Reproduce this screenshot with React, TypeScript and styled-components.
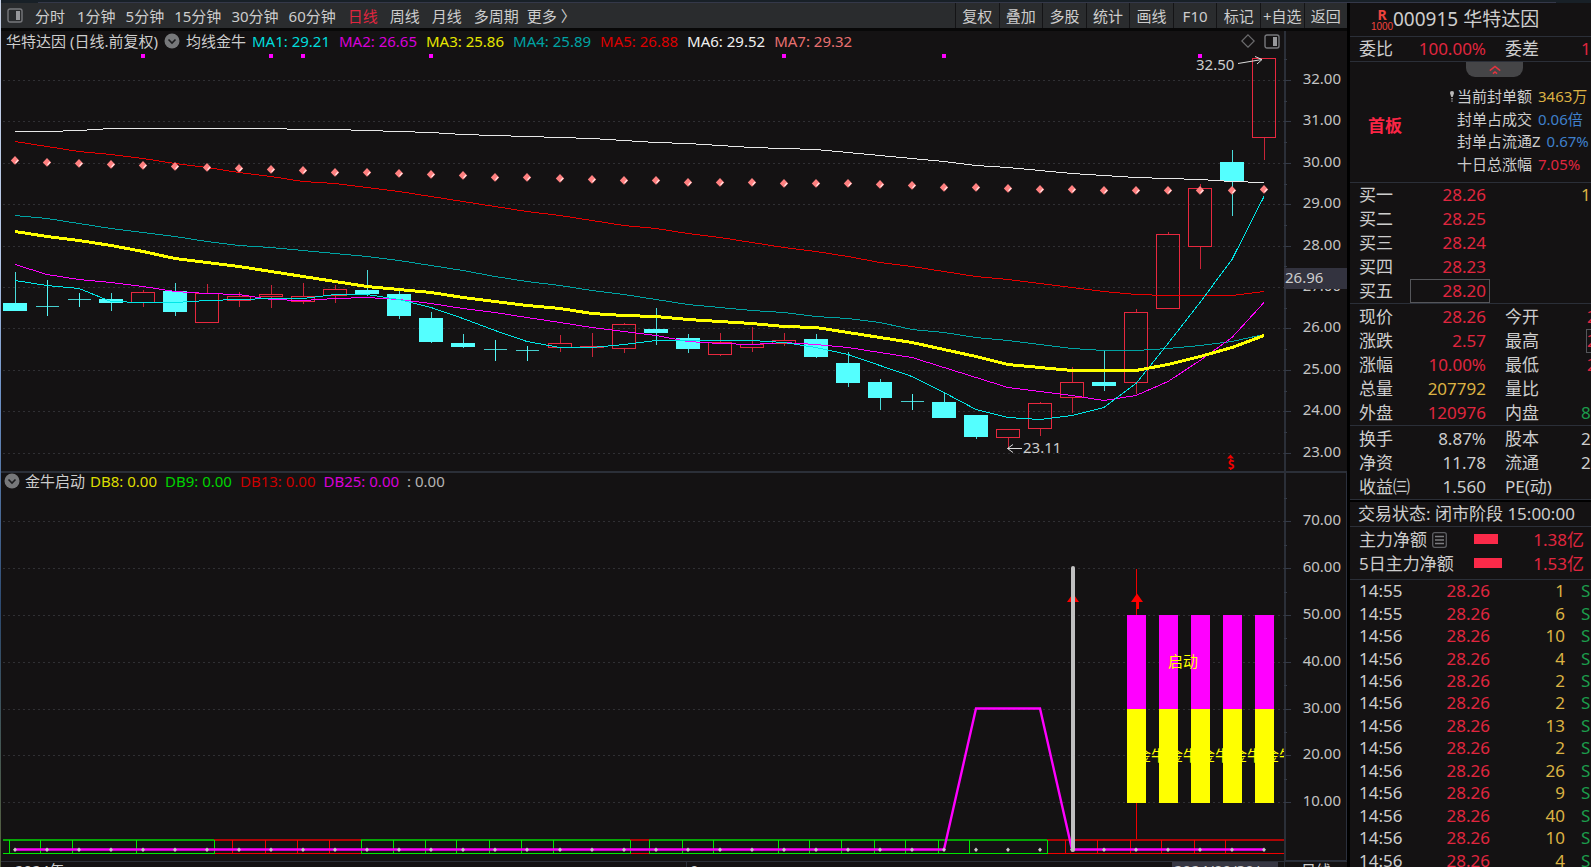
import React from "react";
import styled, { createGlobalStyle, css } from "styled-components";

/* ---------- theme values ---------- */

const color = {
  bg: "#141213",
  bar: "#2a2c2e",
  rule: "#2b2f38",
  text: "#cdcdcd",
  red: "#e0263f",
  gold: "#dcb243",
  blue: "#3f80cc",
  green: "#1c9c4c",
  up: "#e8283f",
  down: "#54ffff",
};

const fontStack = `"Noto Sans", "Noto Sans CJK SC", sans-serif`;

const GlobalStyle = createGlobalStyle`
  * { box-sizing: border-box; }
  body {
    margin: 0;
    overflow: hidden;
    background: #000;
    color: ${color.text};
    font: 400 15px/20px ${fontStack};
  }
  dl, dd, dt, p, h1, h2 { margin: 0; font-size: inherit; font-weight: 400; }
`;

/* ---------- page frame ---------- */

const Page = styled.div`
  display: flex;
  height: 100vh;
  overflow: hidden;
`;

const DesktopEdge = styled.div`
  flex: 0 0 1px;
  background: linear-gradient(#c9d3e8, #b4c6e6 30%, #6f93c8 45%, #2d4a70 70%, #55603f 98%);
`;

const Window = styled.div`
  display: flex;
  flex: 1;
  flex-direction: column;
  min-width: 0;
`;

const TopStrip = styled.div`
  flex: 0 0 3px;
  padding: 2px 35px 0 37px;
  background: #182027;
`;

const TopLine = styled.div`
  height: 1px;
  background: #343849;
`;

const Body = styled.div`
  display: flex;
  flex: 1;
  gap: 3px;
  min-height: 0;
`;

const ChartColumn = styled.main`
  flex: 1;
  min-width: 0;
  overflow: hidden;
  background: ${color.bg};
`;

/* ---------- toolbar ---------- */

const Toolbar = styled.nav`
  display: flex;
  height: 28px;
  border-bottom: 3px solid #080808;
  background: ${color.bar};
`;

const Periods = styled.div`
  display: flex;
  flex: 1;
  align-items: center;
  gap: 12px;
  padding-left: 6px;
`;

const PeriodGroup = styled.div<{ $gap: number }>`
  display: flex;
  gap: ${(p) => p.$gap}px;
`;

const plainButton = css`
  padding: 0;
  border: 0;
  background: none;
  color: inherit;
  font: inherit;
  white-space: nowrap;
  cursor: pointer;
`;

const PeriodButton = styled.button<{ $active?: boolean }>`
  ${plainButton}
  color: ${(p) => (p.$active ? color.red : color.text)};
`;

const IconButton = styled.button`
  ${plainButton}
  display: flex;
`;

const Tools = styled.div`
  display: flex;
  flex: 0 0 392px;
`;

const ToolButton = styled.button`
  ${plainButton}
  flex: 1 1 0;
  min-width: 0;
  border-left: 1px solid #141416;
`;

/* ---------- chart panels ---------- */

const PanelHead = styled.header<{ $height: number }>`
  display: grid;
  grid-template-columns: minmax(0, 1283fr) minmax(0, 63fr);
  height: ${(p) => p.$height}px;
  line-height: 16px;
`;

const HeadMain = styled.div<{ $pad: number; $gap: number }>`
  display: flex;
  align-items: center;
  gap: ${(p) => p.$gap}px;
  padding: 0 4px 2px ${(p) => p.$pad}px;
  white-space: nowrap;
`;

const HeadAxis = styled.div<{ $boxed?: boolean }>`
  border-left: 2px solid ${color.rule};
  border-right: ${(p) => (p.$boxed ? "1px solid #2b303d" : "0")};
`;

const Readouts = styled.div<{ $gap: number }>`
  display: flex;
  flex: 1;
  gap: ${(p) => p.$gap}px;
`;

const Readout = styled.span<{ $color: string }>`
  color: ${(p) => p.$color};
`;

const HeadIcons = styled.div`
  display: flex;
  align-items: center;
  gap: 9px;
`;

const Panel = styled.section<{ $divided?: boolean }>`
  border-top: ${(p) => (p.$divided ? `2px solid ${color.rule}` : "0")};
`;

const Plot = styled.svg`
  display: block;
  width: 100%;
  height: auto;
  font-family: ${fontStack};
  font-size: 15px;
`;

const TimeAxis = styled.footer`
  display: grid;
  grid-template-columns:
    minmax(0, 685fr) minmax(0, 486fr) minmax(0, 106fr) minmax(0, 6fr) minmax(0, 63fr);
  height: 24px;
  border-top: 1px solid ${color.rule};
  line-height: 17px;
  white-space: nowrap;
`;

const TimeSpan = styled.div<{ $pad: number; $ruled?: boolean }>`
  padding-left: ${(p) => p.$pad}px;
  border-left: ${(p) => (p.$ruled ? `1px solid ${color.rule}` : "0")};
`;

const DateTag = styled.div`
  padding-left: 2px;
  background: #373743;
`;

/* ---------- quote side panel ---------- */

const Side = styled.aside`
  flex: 0 0 241px;
  overflow: hidden;
  background: ${color.bg};
  font-size: 17px;
  line-height: 24px;
  white-space: nowrap;
`;

const StockTitle = styled.h1`
  display: flex;
  align-items: center;
  height: 34px;
  padding: 0 0 2px 21px;
  border-bottom: 1px solid ${color.rule};
  font-size: 19px;
`;

const MarginBadge = styled.span`
  display: flex;
  flex-direction: column;
  align-items: center;
  width: 22px;
  padding-top: 3px;
  color: #f0443e;
`;

const BadgeLetter = styled.b`
  font-size: 14px;
  line-height: 13px;
`;

const BadgeNumber = styled.span`
  font-family: "Liberation Sans", sans-serif;
  font-size: 10px;
  line-height: 12px;
`;

const Block = styled.div<{ $heavy?: boolean; $pad: number }>`
  padding-top: ${(p) => p.$pad}px;
  border-bottom: 1px solid ${color.rule};
  margin-bottom: ${(p) => (p.$heavy ? 2 : 0)}px;
  box-shadow: ${(p) => (p.$heavy ? "0 2px 0 #000" : "none")};
`;

const QuoteRow = styled.dl`
  display: grid;
  grid-template-columns: 58px 73px 92px 1fr;
  height: 24px;
  padding-left: 9px;
  margin-right: -10px;
`;

const Label = styled.dt<{ $second?: boolean }>`
  padding-left: ${(p) => (p.$second ? 15 : 0)}px;
`;

const Value = styled.dd<{ $tone: string; $framed?: boolean }>`
  margin-left: -7px;
  padding-right: 3px;
  border: 1px solid ${(p) => (p.$framed ? "#55565a" : "transparent")};
  color: ${(p) => p.$tone};
  line-height: 22px;
  text-align: right;
`;

const EdgeValue = styled.dd<{ $tone: string; $framed?: boolean; $price?: boolean }>`
  margin-left: ${(p) => (p.$price ? 4 : -2)}px;
  border: 1px solid ${(p) => (p.$framed ? "#55565a" : "transparent")};
  color: ${(p) => p.$tone};
  line-height: 22px;
`;

const LimitBlock = styled.section`
  height: 121px;
  border-bottom: 1px solid ${color.rule};
`;

const CollapseTab = styled.button`
  ${plainButton}
  display: flex;
  align-items: center;
  justify-content: center;
  width: 57px;
  height: 15px;
  margin-left: 116px;
  border-radius: 0 0 9px 9px;
  background: #454547;
`;

const LimitBody = styled.div`
  display: flex;
  align-items: center;
  padding-top: 8px;
`;

const LimitName = styled.b`
  flex: 0 0 99px;
  padding: 0 0 9px 18px;
  color: #fb2545;
`;

const LimitList = styled.ul`
  display: grid;
  grid-auto-rows: 1fr;
  height: 90px;
  margin: 0;
  padding: 0;
  list-style: none;
  font-size: 15px;
  line-height: 22px;
`;

const LimitItem = styled.li`
  display: flex;
  align-items: center;
  gap: 6px;
`;

const LimitLabel = styled.span`
  display: flex;
  align-items: center;
`;

const PinSlot = styled.span`
  display: flex;
  width: 8px;
`;

const Toned = styled.span<{ $tone: string }>`
  color: ${(p) => p.$tone};
`;

const Status = styled.p`
  height: 25px;
  padding-left: 8px;
  border-bottom: 1px solid ${color.rule};
`;

const FlowRow = styled.dl`
  display: grid;
  grid-template-columns: 115px 34px 1fr;
  align-items: center;
  height: 24px;
  padding: 0 7px 0 9px;
`;

const FlowLabel = styled.dt`
  display: flex;
  align-items: center;
  gap: 5px;
`;

const FlowBar = styled.dd<{ $width: number }>`
  width: ${(p) => p.$width}px;
  height: 10px;
  margin-bottom: 2px;
  background: #fb2a49;
`;

const FlowValue = styled.dd`
  color: ${color.red};
  text-align: right;
`;

const FlowBlock = styled.div`
  height: 53px;
  padding-top: 1px;
  border-bottom: 1px solid ${color.rule};
`;

const TickTable = styled.table`
  width: 100%;
  height: 292px;
  border-collapse: collapse;
  table-layout: fixed;
  line-height: 22px;
`;

const Tick = styled.td<{ $tone: string; $width?: number; $right?: boolean; $pad?: number }>`
  width: ${(p) => (p.$width ? `${p.$width}px` : "auto")};
  padding: 0 0 0 ${(p) => p.$pad ?? 0}px;
  color: ${(p) => p.$tone};
  text-align: ${(p) => (p.$right ? "right" : "left")};
`;

/* ---------- icons ---------- */

const PanelIcon = () => (
  <svg width="16" height="15" viewBox="0 0 16 15" aria-hidden="true">
    <rect x="1" y="1" width="14" height="13" rx="2" fill="none" stroke="#77787c" strokeWidth="1.4" />
    <rect x="9" y="3" width="4" height="9" fill="#97989b" />
  </svg>
);

const ChevronDisc = () => (
  <svg width="16" height="16" viewBox="0 0 16 16" aria-hidden="true">
    <circle cx="8" cy="8" r="7.5" fill="#77787a" />
    <path d="M4.5 6.5 8 10l3.5-3.5" fill="none" stroke="#1c1c1e" strokeWidth="1.6" />
  </svg>
);

const DiamondIcon = () => (
  <svg width="14" height="14" viewBox="0 0 14 14" aria-hidden="true">
    <path d="M7 .8 13.2 7 7 13.2.8 7z" fill="none" stroke="#6c6c6e" strokeWidth="1.2" />
  </svg>
);

const DoubleUp = () => (
  <svg width="12" height="10" viewBox="0 0 12 10" aria-hidden="true">
    <path d="M.8 5.6 6 1.4l5.2 4.2M3.9 8.6 6 6.9l2.1 1.7" fill="none" stroke="#e5343f" strokeWidth="1.5" />
  </svg>
);

const PinIcon = () => (
  <svg width="6" height="13" viewBox="0 0 6 13" aria-hidden="true">
    <path d="M3 1a2 2 0 0 1 2 2.2L3.7 7H2.3L1 3.2A2 2 0 0 1 3 1z" fill="#b9b9b9" />
    <path d="M2.4 8h1.2v1.6H2.4zM2.4 10.6h1.2v1.2H2.4z" fill="#b9b9b9" />
  </svg>
);

const ListIcon = () => (
  <svg width="15" height="16" viewBox="0 0 15 16" aria-hidden="true">
    <rect x=".7" y=".7" width="13.6" height="14.6" rx="2" fill="none" stroke="#5d5e62" strokeWidth="1.3" />
    <path d="M3 4.5h9M3 8h9M3 11.5h9" stroke="#7c7d80" strokeWidth="1.4" />
  </svg>
);

/* ---------- chart data, in plot coordinates ---------- */

const xAt = (i: number) => Math.round(15 + 32.03 * i);
const AXIS_X = 1284;

type Candle = [kind: "u" | "d", high: number, top: number, bottom: number, low: number];

const candles: Candle[] = [
  ["d", 272, 303, 310, 311], ["d", 280, 306, 306, 316], ["d", 293, 299, 299, 307],
  ["d", 293, 299, 302, 311], ["u", 290, 292, 302, 307], ["d", 283, 291, 311, 316],
  ["u", 284, 293, 322, 322], ["u", 292, 296, 300, 307], ["u", 285, 294, 296, 308],
  ["u", 283, 296, 301, 304], ["u", 285, 289, 295, 303], ["d", 270, 290, 293, 296],
  ["d", 290, 294, 315, 319], ["d", 312, 318, 341, 343], ["d", 334, 343, 346, 348],
  ["d", 340, 349, 349, 361], ["d", 346, 350, 350, 361], ["u", 335, 343, 347, 352],
  ["u", 333, 346, 347, 357], ["u", 323, 324, 348, 353], ["d", 308, 329, 332, 345],
  ["d", 334, 338, 348, 353], ["u", 333, 342, 354, 356], ["u", 327, 344, 347, 352],
  ["u", 333, 340, 343, 346], ["d", 334, 339, 356, 358], ["d", 352, 363, 382, 387],
  ["d", 379, 382, 397, 410], ["d", 394, 401, 401, 410], ["d", 392, 402, 417, 418],
  ["d", 415, 415, 436, 439], ["u", 429, 429, 437, 448], ["u", 402, 403, 428, 436],
  ["u", 367, 382, 397, 413], ["d", 350, 382, 385, 391], ["u", 309, 312, 382, 394],
  ["u", 232, 234, 308, 308], ["u", 184, 188, 246, 269], ["d", 150, 162, 180, 216],
  ["u", 58, 58, 137, 160],
];

const averages: { stroke: string; width: number; ys: number[] }[] = [
  {
    stroke: "#e8e8e8", width: 1,
    ys: [131, 131, 130, 128, 128, 128, 128, 128, 128, 129, 129, 130, 131, 132, 134, 135, 136, 137, 138, 140, 142, 143, 145, 147, 148, 149, 152, 155, 158, 161, 165, 167, 170, 173, 175, 177, 178, 179, 181, 182],
  },
  {
    stroke: "#e60000", width: 1,
    ys: [141, 146, 151, 154, 158, 163, 167, 172, 176, 181, 183, 187, 191, 196, 201, 206, 211, 215, 220, 225, 228, 233, 237, 242, 247, 251, 256, 262, 266, 271, 276, 279, 283, 287, 291, 294, 295, 295, 295, 291],
  },
  {
    stroke: "#00a3a3", width: 1,
    ys: [215, 218, 223, 228, 232, 236, 241, 245, 247, 250, 253, 256, 260, 265, 270, 276, 281, 285, 290, 294, 299, 304, 307, 310, 312, 316, 318, 322, 329, 332, 337, 340, 344, 348, 350, 350, 348, 345, 341, 334],
  },
  {
    stroke: "#ff00ff", width: 1,
    ys: [264, 274, 279, 282, 286, 291, 293, 294, 299, 300, 298, 297, 299, 303, 308, 312, 317, 322, 327, 331, 335, 341, 343, 344, 342, 344, 347, 352, 357, 367, 377, 387, 391, 395, 400, 395, 381, 360, 337, 302],
  },
  {
    stroke: "#00e6e6", width: 1,
    ys: [280, 285, 288, 301, 302, 302, 300, 299, 298, 298, 294, 294, 299, 307, 318, 330, 341, 347, 347, 344, 340, 340, 340, 340, 342, 347, 354, 365, 376, 392, 409, 417, 419, 415, 407, 383, 343, 302, 259, 196],
  },
  {
    stroke: "#ffff00", width: 3,
    ys: [231, 236, 240, 245, 251, 258, 262, 266, 271, 276, 281, 286, 289, 292, 297, 301, 305, 308, 313, 315, 316, 319, 321, 323, 326, 327, 332, 337, 342, 349, 356, 364, 367, 370, 370, 370, 364, 356, 347, 335],
  },
];

const dotLine = [160, 162, 163, 164, 165, 166, 167, 168, 169, 170, 172, 172, 173, 174, 175, 177, 177, 178, 179, 180, 180, 182, 182, 182, 183, 183, 183, 184, 185, 187, 187, 188, 189, 189, 190, 190, 190, 190, 190, 189];

const signalDays = [4, 8, 9, 13, 24, 29, 37];

const priceY = (p: number) => Math.round(80 + (32 - p) * 41.4);
const levelY = (v: number) => Math.round(849 - v * 4.68);

const Grid = ({ ys }: { ys: number[] }) => (
  <g stroke="#303034" strokeDasharray="2 3" shapeRendering="crispEdges">
    {ys.map((y) => (
      <line key={y} x1="3" x2={AXIS_X} y1={y + 0.5} y2={y + 0.5} />
    ))}
  </g>
);

const Scale = ({ values, at, step }: { values: number[]; at: (v: number) => number; step: number }) => (
  <>
    <g stroke="#343a46" shapeRendering="crispEdges">
      {values.map((v) => (
        <path key={v} d={`M${AXIS_X} ${at(v) + 0.5}h7M${AXIS_X} ${at(v + step / 2) + 0.5}h3`} />
      ))}
    </g>
    <g fill="#c4c4c4" textAnchor="end">
      {values.map((v) => (
        <text key={v} x="1341" y={at(v) + 4}>{v.toFixed(2)}</text>
      ))}
    </g>
  </>
);

const CandleMark = ({ i, candle }: { i: number; candle: Candle }) => {
  const [kind, high, top, bottom, low] = candle;
  const x = xAt(i);
  const stroke = kind === "u" ? color.up : color.down;
  return (
    <g stroke={stroke} fill={kind === "u" ? "none" : color.down}>
      <path d={`M${x + 0.5} ${high}V${top}M${x + 0.5} ${bottom}V${low}`} strokeOpacity=".85" />
      {top === bottom ? (
        <path d={`M${x - 11} ${top + 0.5}h23M${x + 0.5} ${high}V${low}`} strokeOpacity=".8" />
      ) : (
        <rect x={x - 11.5} y={top + 0.5} width="23" height={bottom - top} />
      )}
    </g>
  );
};

const PricePlot = () => {
  const prices = [32, 31, 30, 29, 28, 27, 26, 25, 24, 23];
  return (
    <Plot viewBox="1 53 1346 418" role="img" aria-label="华特达因 日线">
      <Grid ys={prices.map(priceY)} />
      <g shapeRendering="crispEdges">
        {candles.map((c, i) => <CandleMark key={i} i={i} candle={c} />)}
        {averages.map((a) => (
          <polyline
            key={a.stroke}
            points={a.ys.map((y, i) => `${xAt(i)},${y + 0.5}`).join(" ")}
            fill="none"
            stroke={a.stroke}
            strokeWidth={a.width}
          />
        ))}
        {signalDays.map((i) => (
          <rect key={i} x={xAt(i) - 2} y="54" width="4" height="4" fill="#ff00ff" />
        ))}
      </g>
      {dotLine.map((y, i) => (
        <g key={i}>
          <path d={`M${xAt(i)} ${y - 4}l4.2 4.4-4.2 4.4-4.2-4.4z`} fill="#ff8080" />
          <path d={`M${xAt(i) + 0.5} ${y + 3}l2.6-3`} stroke="#ffe0e0" strokeWidth="1.2" />
        </g>
      ))}
      <g fill="none" stroke="#dcdcdc">
        <path d="M1238 63.5 1262 59.5M1255 56.5l7 3-5 4.5" />
        <path d="M1022 448.5h-14.5M1013 444.5l-5.5 4 5.5 4" />
      </g>
      <g fill="#cdcdcd">
        <text x="1196" y="70">32.50</text>
        <text x="1023" y="453">23.11</text>
      </g>
      <g fill="#f00000">
        <path d="M1230.5 454.5l3.5 4h-7z" />
        <text x="1231" y="469" textAnchor="middle" fontSize="12" fontWeight="700">S</text>
        <path d="M1230 459h1.5v1.5h-1.5zM1230 468.5h1.5v1.5h-1.5z" />
      </g>
      <rect x="1284" y="53" width="2" height="418" fill={color.rule} />
      <Scale values={prices} at={priceY} step={1} />
      <rect x="1284" y="268" width="63" height="21" fill="#33333f" />
      <text x="1285" y="283" fill="#cdcdcd">26.96</text>
    </Plot>
  );
};

/* Runs of the trend strip along the zero line: colour, extent and inner dividers. */
const stripRuns: { stroke: string; from: number; to: number; marks: number[] }[] = [
  { stroke: "#f00000", from: 214, to: 361, marks: [232, 265, 297, 329] },
  { stroke: "#f00000", from: 630, to: 649, marks: [] },
  { stroke: "#f00000", from: 1047, to: 1284, marks: [1065, 1097, 1130, 1161, 1194, 1225] },
  { stroke: "#00e600", from: 3, to: 214, marks: [9, 40, 72, 136, 214] },
  { stroke: "#00e600", from: 361, to: 630, marks: [361, 393, 425, 456, 489, 521, 553, 630] },
  { stroke: "#00e600", from: 649, to: 1047, marks: [649, 682, 713, 778, 809, 841, 874, 905, 938, 969, 1047] },
];

const barDays = [35, 36, 37, 38, 39];

const UpMarker = ({ x }: { x: number }) => (
  <path d={`M${x} 593.5l6 8.5h-4v7h-2v-7h-6z`} fill="#ff0000" />
);

const SignalPlot = () => {
  const levels = [70, 60, 50, 40, 30, 20, 10];
  return (
    <Plot viewBox="1 491 1346 370" role="img" aria-label="金牛启动">
      <Grid ys={levels.map(levelY)} />
      <g fill="none" shapeRendering="crispEdges">
        {stripRuns.map((r) => (
          <g key={r.from} stroke={r.stroke}>
            <path d={`M${r.from} 840H${r.to}`} strokeWidth="2" strokeOpacity=".7" />
            <path d={`M${r.from} 853.5H${r.to}` + r.marks.map((m) => `M${m + 0.5} 840V854`).join("")} />
          </g>
        ))}
        <path d="M1136.5 569V839" stroke="#f00000" />
      </g>
      <UpMarker x={1137} />
      <path d="M1073 593.5l6 8.5h-12z" fill="#ff0000" />
      <path
        d={`M15 849.5H${xAt(29)}L${xAt(30)} 708.5H${xAt(32)}L${xAt(33)} 849.5H${xAt(39)}`}
        fill="none"
        stroke="#ff00ff"
        strokeWidth="2.4"
      />
      {candles.map((_, i) => (
        <path key={i} d={`M${xAt(i)} 847.5l2 2.2-2 2.2-2-2.2z`} fill="#c8c8c8" />
      ))}
      <path d="M1073 568V850" stroke="#c0c0c0" strokeWidth="4" strokeLinecap="round" />
      {barDays.map((i) => (
        <g key={i}>
          <rect x={xAt(i) - 9} y="615" width="19" height="94" fill="#ff00ff" />
          <rect x={xAt(i) - 9} y="709" width="19" height="94" fill="#ffff00" />
        </g>
      ))}
      <g fill="#ffff00">
        <text x="1168" y="667">启动</text>
        {barDays.map((i) => <text key={i} x={xAt(i)} y="761">金牛</text>)}
      </g>
      <rect x="1284" y="491" width="63" height="370" fill={color.bg} />
      <path d="M1346.5 491V860.5H1285" fill="none" stroke="#2b303d" />
      <rect x="1284" y="491" width="2" height="370" fill={color.rule} />
      <Scale values={levels} at={levelY} step={10} />
    </Plot>
  );
};

/* ---------- text content ---------- */

const minutes = ["1分钟", "5分钟", "15分钟", "30分钟", "60分钟"];
const longer = ["日线", "周线", "月线"];
const tools = ["复权", "叠加", "多股", "统计", "画线", "F10", "标记", "+自选", "返回"];

const maReadouts: [string, string][] = [
  ["MA1: 29.21", "#00dcdc"], ["MA2: 26.65", "#d800d8"], ["MA3: 25.86", "#e6e600"],
  ["MA4: 25.89", "#00a3a3"], ["MA5: 26.88", "#dc0000"], ["MA6: 29.52", "#f0f0f0"],
  ["MA7: 29.32", "#e87070"],
];

const dbReadouts: [string, string][] = [
  ["DB8: 0.00", "#dcdc00"], ["DB9: 0.00", "#00d200"], ["DB13: 0.00", "#cc0000"],
  ["DB25: 0.00", "#d800d8"], [": 0.00", "#b4b4b4"],
];

const limits: [string, string, string][] = [
  ["当前封单额", "3463万", color.gold],
  ["封单占成交", "0.06倍", color.blue],
  ["封单占流通Z", "0.67%", color.blue],
  ["十日总涨幅", "7.05%", color.red],
];

type Quote = {
  label: string; value: string; tone: string; framed?: boolean;
  label2?: string; value2?: string; tone2?: string; price2?: boolean; framed2?: boolean;
};

const ratio: Quote[] = [
  { label: "委比", value: "100.00%", tone: color.red, label2: "委差", value2: "1", tone2: color.red },
];

const bids: Quote[] = [
  { label: "买一", value: "28.26", tone: color.red, value2: "1", tone2: color.gold },
  { label: "买二", value: "28.25", tone: color.red },
  { label: "买三", value: "28.24", tone: color.red },
  { label: "买四", value: "28.23", tone: color.red },
  { label: "买五", value: "28.20", tone: color.red, framed: true },
];

const prices: Quote[] = [
  { label: "现价", value: "28.26", tone: color.red, label2: "今开", value2: "2", tone2: color.red, price2: true },
  { label: "涨跌", value: "2.57", tone: color.red, label2: "最高", value2: "2", tone2: color.red, price2: true, framed2: true },
  { label: "涨幅", value: "10.00%", tone: color.red, label2: "最低", value2: "2", tone2: color.red, price2: true },
  { label: "总量", value: "207792", tone: color.gold, label2: "量比" },
  { label: "外盘", value: "120976", tone: color.red, label2: "内盘", value2: "8", tone2: color.green },
];

const basics: Quote[] = [
  { label: "换手", value: "8.87%", tone: color.text, label2: "股本", value2: "2", tone2: color.text },
  { label: "净资", value: "11.78", tone: color.text, label2: "流通", value2: "2", tone2: color.text },
  { label: "收益㈢", value: "1.560", tone: color.text, label2: "PE(动)" },
];

const ticks: [string, string][] = [
  ["14:55", "1"], ["14:55", "6"], ["14:56", "10"], ["14:56", "4"], ["14:56", "2"],
  ["14:56", "2"], ["14:56", "13"], ["14:56", "2"], ["14:56", "26"], ["14:56", "9"],
  ["14:56", "40"], ["14:56", "10"], ["14:56", "4"],
];

const Quotes = ({ rows, heavy, pad = 0 }: { rows: Quote[]; heavy?: boolean; pad?: number }) => (
  <Block $heavy={heavy} $pad={pad}>
    {rows.map((q) => (
      <QuoteRow key={q.label}>
        <Label>{q.label}</Label>
        <Value $tone={q.tone} $framed={q.framed}>{q.value}</Value>
        <Label $second>{q.label2}</Label>
        {q.value2 && (
          <EdgeValue $tone={q.tone2 ?? color.text} $price={q.price2} $framed={q.framed2}>{q.value2}</EdgeValue>
        )}
      </QuoteRow>
    ))}
  </Block>
);

export default function App() {
  return (
    <>
      <GlobalStyle />
      <Page>
        <DesktopEdge />
        <Window>
          <TopStrip><TopLine /></TopStrip>
          <Body>
            <ChartColumn>
              <Toolbar>
                <Periods>
                  <IconButton aria-label="侧栏"><PanelIcon /></IconButton>
                  <PeriodButton>分时</PeriodButton>
                  <PeriodGroup $gap={10}>
                    {minutes.map((m) => <PeriodButton key={m}>{m}</PeriodButton>)}
                  </PeriodGroup>
                  {longer.map((m) => <PeriodButton key={m} $active={m === "日线"}>{m}</PeriodButton>)}
                  <PeriodGroup $gap={8}>
                    <PeriodButton>多周期</PeriodButton>
                    <PeriodButton>更多 〉</PeriodButton>
                  </PeriodGroup>
                </Periods>
                <Tools>
                  {tools.map((t) => <ToolButton key={t}>{t}</ToolButton>)}
                </Tools>
              </Toolbar>

              <Panel>
                <PanelHead $height={22}>
                  <HeadMain $pad={5} $gap={6}>
                    <h2>华特达因 (日线.前复权)</h2>
                    <IconButton aria-label="指标菜单"><ChevronDisc /></IconButton>
                    <span>均线金牛</span>
                    <Readouts $gap={9}>
                      {maReadouts.map(([t, c]) => <Readout key={t} $color={c}>{t}</Readout>)}
                    </Readouts>
                    <HeadIcons>
                      <IconButton aria-label="标记"><DiamondIcon /></IconButton>
                      <IconButton aria-label="右侧栏"><PanelIcon /></IconButton>
                    </HeadIcons>
                  </HeadMain>
                  <HeadAxis />
                </PanelHead>
                <PricePlot />
              </Panel>

              <Panel $divided>
                <PanelHead $height={18}>
                  <HeadMain $pad={3} $gap={5}>
                    <IconButton aria-label="指标菜单"><ChevronDisc /></IconButton>
                    <h2>金牛启动</h2>
                    <Readouts $gap={8}>
                      {dbReadouts.map(([t, c]) => <Readout key={t} $color={c}>{t}</Readout>)}
                    </Readouts>
                  </HeadMain>
                  <HeadAxis $boxed />
                </PanelHead>
                <SignalPlot />
              </Panel>

              <TimeAxis>
                <TimeSpan $pad={14}>2024年</TimeSpan>
                <TimeSpan $pad={3} $ruled>9</TimeSpan>
                <DateTag>2024/09/30/一</DateTag>
                <TimeSpan $pad={0} />
                <TimeSpan $pad={16} $ruled>日线</TimeSpan>
              </TimeAxis>
            </ChartColumn>

            <Side>
              <StockTitle>
                <MarginBadge>
                  <BadgeLetter>R</BadgeLetter>
                  <BadgeNumber>1000</BadgeNumber>
                </MarginBadge>
                000915 华特达因
              </StockTitle>
              <Quotes rows={ratio} />
              <LimitBlock>
                <CollapseTab aria-label="收起"><DoubleUp /></CollapseTab>
                <LimitBody>
                  <LimitName>首板</LimitName>
                  <LimitList>
                    {limits.map(([label, value, tone], i) => (
                      <LimitItem key={label}>
                        <LimitLabel>
                          <PinSlot>{i === 0 && <PinIcon />}</PinSlot>
                          {label}
                        </LimitLabel>
                        <Toned $tone={tone}>{value}</Toned>
                      </LimitItem>
                    ))}
                  </LimitList>
                </LimitBody>
              </LimitBlock>
              <Quotes rows={bids} />
              <Quotes rows={prices} pad={1} />
              <Quotes rows={basics} pad={1} heavy />
              <Status>交易状态: 闭市阶段 15:00:00</Status>
              <FlowBlock>
                <FlowRow>
                  <FlowLabel>主力净额<ListIcon /></FlowLabel>
                  <FlowBar $width={24} />
                  <FlowValue>1.38亿</FlowValue>
                </FlowRow>
                <FlowRow>
                  <FlowLabel>5日主力净额</FlowLabel>
                  <FlowBar $width={28} />
                  <FlowValue>1.53亿</FlowValue>
                </FlowRow>
              </FlowBlock>
              <TickTable>
                <tbody>
                  {ticks.map(([time, volume], i) => (
                    <tr key={i}>
                      <Tick $tone={color.text} $width={80} $pad={9}>{time}</Tick>
                      <Tick $tone={color.red} $width={60} $right>28.26</Tick>
                      <Tick $tone={color.gold} $width={75} $right>{volume}</Tick>
                      <Tick $tone={color.green} $pad={16}>S</Tick>
                    </tr>
                  ))}
                </tbody>
              </TickTable>
            </Side>
          </Body>
        </Window>
      </Page>
    </>
  );
}
